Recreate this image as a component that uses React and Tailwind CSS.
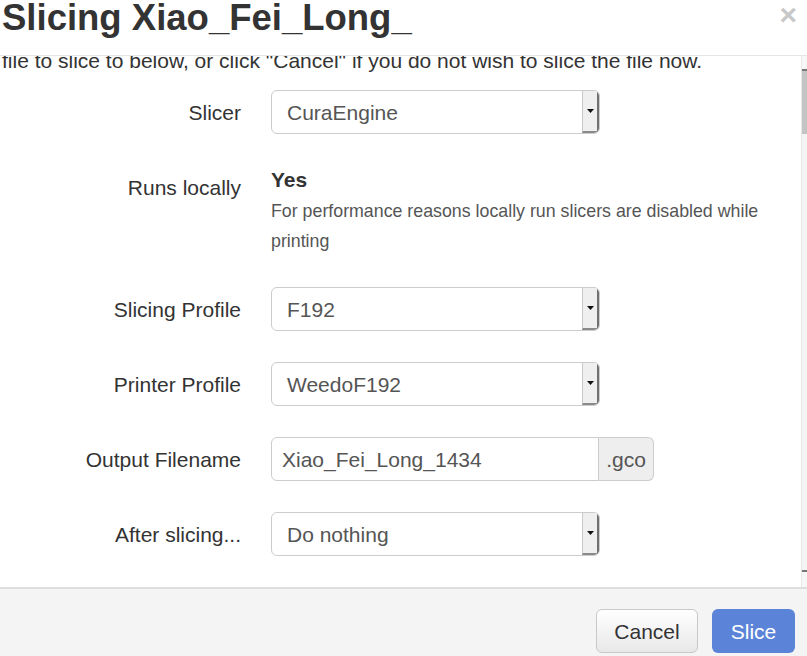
import React from "react";

const font = { fontFamily: '"Liberation Sans", Arial, sans-serif' };

const SelectBox = ({ value }) => (
  <div className="flex h-[44px] w-[329px] rounded-[6px] border border-[#cccccc] bg-white overflow-hidden">
    <div className="flex-1 flex items-center pl-[15px] pt-[2px] text-[21px] text-[#555555]">{value}</div>
    <div className="w-[17px] flex items-center justify-center bg-[#efefef] border-l border-[#c8c8c8] border-r-2 border-r-[#707070] border-b-2 border-b-[#8a8a8a]">
      <svg width="7" height="4" viewBox="0 0 7 4"><path d="M0 0h7L3.5 4z" fill="#111" /></svg>
    </div>
  </div>
);

const Row = ({ label, children }) => (
  <div className="flex gap-[30px]">
    <div className="w-[239px] shrink-0 text-right pt-[8px] leading-[30px] text-[21px] text-[#333333]">{label}</div>
    <div className="flex-1 min-w-0">{children}</div>
  </div>
);

export default function App() {
  return (
    <div className="w-[807px] h-[656px] overflow-hidden bg-white flex flex-col" style={font}>
      {/* Header */}
      <div className="h-[56px] shrink-0 flex justify-between items-start border-b border-[#e5e5e5]">
        <h3 className="mt-[-1px] ml-[2px] text-[36.5px] leading-[38px] font-bold text-[#333333] whitespace-nowrap">Slicing Xiao_Fei_Long_</h3>
        <span className="mr-[10px] mt-0 text-[30px] leading-[30px] font-bold text-[#c8c8c8]">×</span>
      </div>

      {/* Body */}
      <div className="h-[531px] shrink-0 flex overflow-hidden">
        <div className="flex-1 overflow-hidden pl-[2px]">
          <p className="mt-[-10px] mb-[14px] text-[21px] leading-[30px] text-[#333333] whitespace-nowrap">
            file to slice to below, or click "Cancel" if you do not wish to slice the file now.
          </p>
          <div className="flex flex-col gap-[31px]">
            <Row label="Slicer"><SelectBox value="CuraEngine" /></Row>
            <Row label="Runs locally">
              <div className="text-[21px] leading-[30px] font-bold text-[#333333]">Yes</div>
              <div className="mt-[1px] text-[17.8px] leading-[30px] text-[#555555] pr-[10px]">
                For performance reasons locally run slicers are disabled while printing
              </div>
            </Row>
            <Row label="Slicing Profile"><SelectBox value="F192" /></Row>
            <Row label="Printer Profile"><SelectBox value="WeedoF192" /></Row>
            <Row label="Output Filename">
              <div className="flex h-[44px]">
                <div className="w-[328px] flex items-center pl-[10px] pt-[2px] rounded-l-[6px] border border-[#cccccc] bg-white text-[21px] text-[#555555]">
                  Xiao_Fei_Long_1434
                </div>
                <div className="w-[55px] flex items-center justify-center pt-[2px] rounded-r-[6px] border border-l-0 border-[#cccccc] bg-[#eeeeee] text-[21px] text-[#555555]">
                  .gco
                </div>
              </div>
            </Row>
            <Row label="After slicing..."><SelectBox value="Do nothing" /></Row>
          </div>
        </div>
        {/* scrollbar */}
        <div className="w-[6px] shrink-0 flex flex-col border-l border-[#e8e8e8] bg-[#f4f4f4]">
          <div className="h-[15px] bg-[#f7f7f7] border-b-2 border-[#777777]" />
          <div className="h-[63px] bg-[#c4c4c4]" />
          <div className="flex-1" />
          <div className="h-[17px] bg-[#f7f7f7] border-t-2 border-[#777777]" />
        </div>
      </div>

      {/* Footer */}
      <div className="flex-1 bg-[#f4f4f4] border-t-2 border-[#dddddd] flex justify-end items-start gap-[14px] pt-[20px] pr-[12px]">
        <button className="w-[102px] h-[44px] pt-[2px] rounded-[6px] border border-[#c8c8c8] bg-gradient-to-b from-white to-[#e8e8e8] text-[21px] text-[#333333]">Cancel</button>
        <button className="w-[83px] h-[44px] pt-[2px] rounded-[6px] bg-[#5b84d8] text-[21px] text-white">Slice</button>
      </div>
    </div>
  );
}
